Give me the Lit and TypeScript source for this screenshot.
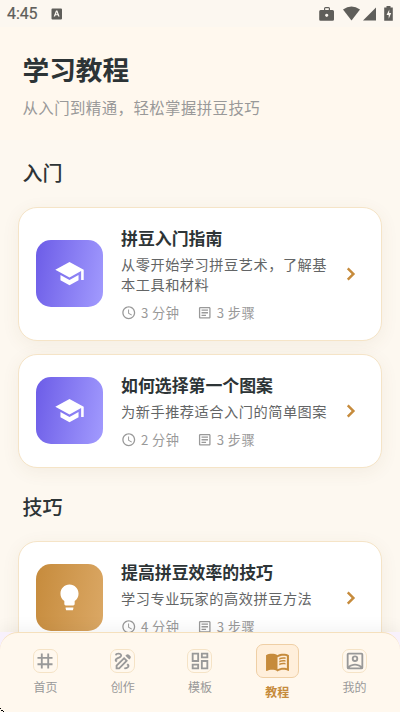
import { LitElement, html, css, svg } from "lit";
import { customElement, property } from "lit/decorators.js";

const ICONS: Record<string, unknown> = {
  school: svg`<path d="M5 13.18v4L12 21l7-3.82v-4L12 17l-7-3.82zM12 3L1 9l11 6 9-4.91V17h2V9L12 3z"/>`,
  bulb: svg`<path d="M12 2C8.1 2 5 5.1 5 9c0 2.4 1.2 4.5 3 5.7V17c0 .6.5 1.1 1.1 1.1h5.8c.6 0 1.1-.5 1.1-1.1v-2.3c1.8-1.2 3-3.3 3-5.7 0-3.9-3.1-7-7-7zM9 19.7h6v.8l-.4 1.4H9.4L9 20.5z"/>`,
  clock: svg`<path d="M11.99 2C6.47 2 2 6.48 2 12s4.47 10 9.99 10C17.52 22 22 17.52 22 12S17.52 2 11.99 2zM12 20c-4.42 0-8-3.58-8-8s3.58-8 8-8 8 3.58 8 8-3.58 8-8 8zm.5-13H11v6l5.25 3.15.75-1.23-4.5-2.67z"/>`,
  article: svg`<path d="M19 5v14H5V5h14m0-2H5c-1.1 0-2 .9-2 2v14c0 1.1.9 2 2 2h14c1.1 0 2-.9 2-2V5c0-1.1-.9-2-2-2zm-5 14H7v-2h7v2zm3-4H7v-2h10v2zm0-4H7V7h10v2z"/>`,
  chevron: svg`<path d="M9.8 6 8.2 7.6 12.6 12l-4.4 4.4L9.8 18l6-6z"/>`,
  grid: svg`<path d="M3.8 7.5h16.4v2H3.8zM3.8 14.5h16.4v2H3.8zM7.5 3.8h2v16.4h-2zM14.5 3.8h2v16.4h-2z"/>`,
  draw: svg`<path d="M18.85 10.39l1.06-1.06c.78-.78.78-2.05 0-2.83L18.5 5.09c-.78-.78-2.05-.78-2.83 0l-1.06 1.06 4.24 4.24zm-5.66-2.83L4 16.76V21h4.24l9.19-9.19-4.24-4.25zM7.41 19H6v-1.41l7.19-7.19 1.41 1.41L7.41 19zM19 17.5c0 2.19-2.54 3.5-5 3.5-.55 0-1-.45-1-1s.45-1 1-1c1.54 0 3-.73 3-1.5 0-.47-.48-.87-1.23-1.2l1.48-1.48c1.07.63 1.75 1.47 1.75 2.68zM4.58 13.35C3.61 12.79 3 12.06 3 11c0-1.8 1.89-2.63 3.56-3.36C7.59 7.18 9 6.56 9 6c0-.41-.78-1-2-1-1.26 0-1.8.61-1.83.64-.35.41-.98.46-1.4.12-.41-.34-.49-.95-.15-1.38C3.73 4.24 4.76 3 7 3s4 1.32 4 3c0 1.87-1.93 2.72-3.64 3.47C6.42 9.88 5 10.5 5 11c0 .31.43.6 1.07.86l-1.49 1.49z"/>`,
  dashboard: svg`<path d="M19 5v2h-4V5h4M9 5v6H5V5h4m10 8v6h-4v-6h4M9 17v2H5v-2h4M21 3h-8v6h8V3zM11 3H3v10h8V3zm10 8h-8v10h8V11zm-10 4H3v6h8v-6z"/>`,
  book: svg`<path d="M17.5 4.5c-1.95 0-4.05.4-5.5 1.5-1.45-1.1-3.55-1.5-5.5-1.5S2.45 4.9 1 6v14.65c0 .25.25.5.5.5.1 0 .15-.05.25-.05C3.1 20.45 5.05 20 6.5 20c1.95 0 4.05.4 5.5 1.5 1.35-.85 3.8-1.5 5.5-1.5 1.65 0 3.35.3 4.75 1.05.1.05.15.05.25.05.25 0 .5-.25.5-.5V6c-1.45-1.1-3.55-1.5-5.5-1.5zm3.5 14c-1.1-.35-2.3-.5-3.5-.5-1.7 0-4.15.65-5.5 1.5V8c1.35-.85 3.8-1.5 5.5-1.5 1.2 0 2.4.15 3.5.5v11.5zM13.7 10.2c1.7-.9 3.8-1.1 6-.7v-1.5c-2.2-.4-4.3-.2-6 .6zM13.7 12.9c1.7-.9 3.8-1.1 6-.7v-1.5c-2.2-.4-4.3-.2-6 .6zM13.7 15.6c1.7-.9 3.8-1.1 6-.7v-1.5c-2.2-.4-4.3-.2-6 .6z"/>`,
  account: svg`<path fill-rule="evenodd" d="M5 3h14a2 2 0 0 1 2 2v14a2 2 0 0 1-2 2H5a2 2 0 0 1-2-2V5a2 2 0 0 1 2-2zM5 5v12.5C6.8 16 9.2 15 12 15s5.2 1 7 2.5V5zM6.26 19h11.48c-.66-.52-2.96-2-5.74-2s-5.08 1.48-5.74 2zM12 6a3.5 3.5 0 1 1 0 7 3.5 3.5 0 0 1 0-7zm0 2a1.5 1.5 0 1 0 0 3 1.5 1.5 0 0 0 0-3z"/>`,
};

@customElement("ui-icon")
class UiIcon extends LitElement {
  @property() name = "";
  static styles = css`
    :host { display: block; flex: none; }
    svg { display: block; width: 100%; height: 100%; fill: currentColor; }
  `;
  render() {
    return html`<svg viewBox="0 0 24 24">${ICONS[this.name]}</svg>`;
  }
}

@customElement("tutorial-card")
class TutorialCard extends LitElement {
  @property() icon = "";
  @property() heading = "";
  @property() text = "";
  @property() minutes = "";
  @property() steps = "";
  static styles = css`
    :host { display: block; }
    .card {
      display: flex; align-items: center; box-sizing: border-box;
      margin: 0 18px 13.5px; padding: 18px 17px; border: 1px solid #f5e4c7;
      border-radius: 19px; background: #fff;
      box-shadow: 0 4px 18px rgba(120, 90, 40, 0.07);
    }
    .tile {
      display: flex; align-items: center; justify-content: center; flex: none;
      width: 67px; height: 67px; border-radius: 15px; color: #fff;
      background: linear-gradient(100deg, #6c5ce7, #a29bfe);
    }
    .tile.bulb { background: linear-gradient(100deg, #c68b3c, #dba865); }
    .tile ui-icon { width: 31px; height: 31px; }
    .body { flex: 1; min-width: 0; margin-left: 18px; }
    .heading { font-size: 16.9px; line-height: 24px; font-weight: 700; color: #2d3436; white-space: nowrap; }
    .text { margin-top: 4px; width: 210px; font-size: 14.2px; line-height: 20px; letter-spacing: 0.53px; color: #636566; }
    .meta { display: flex; align-items: center; margin-top: 9.5px; font-size: 13.2px; line-height: 18px; letter-spacing: 0.4px; color: #999; white-space: nowrap; }
    .meta ui-icon { width: 15.5px; height: 15.5px; margin-right: 4.5px; }
    .meta span + ui-icon { margin-left: 17.5px; }
    .go { width: 26px; height: 26px; color: #c68b3c; }
  `;
  render() {
    return html`<div class="card">
      <div class="tile ${this.icon}"><ui-icon name=${this.icon}></ui-icon></div>
      <div class="body">
        <div class="heading">${this.heading}</div>
        <div class="text">${this.text}</div>
        <div class="meta">
          <ui-icon name="clock"></ui-icon><span>${this.minutes} 分钟</span>
          <ui-icon name="article"></ui-icon><span>${this.steps} 步骤</span>
        </div>
      </div>
      <ui-icon class="go" name="chevron"></ui-icon>
    </div>`;
  }
}

const TABS = [
  { icon: "grid", label: "首页" },
  { icon: "draw", label: "创作" },
  { icon: "dashboard", label: "模板" },
  { icon: "book", label: "教程", active: true },
  { icon: "account", label: "我的" },
];

@customElement("app-root")
class AppRoot extends LitElement {
  static styles = css`
    :host {
      display: flex; flex-direction: column; position: relative; width: 400px; height: 712px; overflow: hidden;
      background: #fdf8f0; font-family: "Noto Sans CJK SC", sans-serif;
    }
    .status {
      display: flex; align-items: center; justify-content: space-between; box-sizing: border-box;
      flex: none; height: 27px; padding: 0 1px 0 7px; background: #fcf7f0; color: #5f5e5a;
    }
    .left, .right { display: flex; align-items: center; }
    .time { font: 400 16px/27px Roboto, sans-serif; letter-spacing: -0.1px; -webkit-text-stroke: 0.2px currentColor; }
    .badge { margin-left: 14px; }
    .status svg { display: block; fill: currentColor; }
    .header { flex: none; box-sizing: border-box; height: 113px; padding: 23px 22.5px 0; background: #fff8ee; }
    .title { font-size: 26.7px; line-height: 38px; font-weight: 700; color: #2d3436; }
    .subtitle { margin-top: 8px; font-size: 15.4px; line-height: 22px; letter-spacing: 0.45px; color: #999; }
    .list { flex: 1; min-height: 0; overflow: hidden; }
    .section { height: 67px; box-sizing: border-box; padding: 18px 22.5px 0; font-size: 20px; line-height: 29px; font-weight: 500; color: #2d3436; }
    .section.next { height: 60px; padding-top: 11px; }
    .dock { flex: none; position: relative; background: #f8f1fc; box-shadow: 0 -4px 15px rgba(0, 0, 0, 0.05); }
    .nav {
      box-sizing: border-box; height: 80px;
      display: grid; grid-template-columns: repeat(5, 77.3px); justify-content: center;
      border-top: 1px solid #f5e0bd; border-radius: 18px 18px 0 0; background: #fff8ee;
    }
    .corner { position: absolute; left: 0; bottom: 0; display: block; }
    .tab { display: flex; flex-direction: column; align-items: center; padding-top: 16px; color: #999; }
    .pill {
      display: flex; align-items: center; justify-content: center; box-sizing: border-box;
      width: 25px; height: 24px; border: 1px solid #f5e3c6; border-radius: 7px;
    }
    .pill ui-icon { width: 22px; height: 22px; }
    .label { margin-top: 5px; font-size: 12px; line-height: 18px; }
    .active { padding-top: 11px; color: #c68b3c; }
    .active .pill { width: 43px; height: 34px; border-color: #efcfa5; background: #ffefdb; }
    .active .pill ui-icon { width: 25px; height: 25px; }
    .active .label { font-weight: 700; }
  `;
  render() {
    return html`
      <div class="status">
        <div class="left">
          <span class="time">4:45</span>
          <svg class="badge" width="12" height="12" viewBox="0 0 12 12"><path fill-rule="evenodd" d="M1.5 0.5h8.5a1 1 0 0 1 1 1v9a1 1 0 0 1-1 1h-8.5a1 1 0 0 1-1-1v-9a1 1 0 0 1 1-1zM5 2.5 2.7 8.5h1.4l.4-1.2h2.3l.4 1.2h1.4L6.4 2.5zM5.7 4l.7 2.2H5z"/></svg>
        </div>
        <div class="right">
          <svg width="81" height="18" viewBox="0 0 81 18">
            <path fill-rule="evenodd" d="M6 5V3.500Q6 2 7.500 2h3Q12 2 12 3.500V5h2.500q1.500 0 1.500 1.500v8q0 1.300-1.500 1.300H2.500Q1.200 15.800 1.200 14.500v-8Q1.200 5 2.500 5zM7.200 5h3.600V3.300H7.200zM8.700 8.700a1.600 1.600 0 1 0 .01 0z"/>
            <path d="M25 4.500Q33.500-1.500 42 4.500L33.500 15.500z"/>
            <path d="M58 2.500v13H45z"/>
            <path fill-rule="evenodd" d="M66.500 2.500h2V1h4v1.500h2.300v13.300h-8.600V2.500zM71.300 4.500 68.500 10h2.200v3.800L73.200 8h-2z"/>
          </svg>
        </div>
      </div>
      <div class="header">
        <div class="title">学习教程</div>
        <div class="subtitle">从入门到精通，轻松掌握拼豆技巧</div>
      </div>
      <div class="list">
        <div class="section">入门</div>
        <tutorial-card icon="school" heading="拼豆入门指南" text="从零开始学习拼豆艺术，了解基本工具和材料" minutes="3" steps="3"></tutorial-card>
        <tutorial-card icon="school" heading="如何选择第一个图案" text="为新手推荐适合入门的简单图案" minutes="2" steps="3"></tutorial-card>
        <div class="section next">技巧</div>
        <tutorial-card icon="bulb" heading="提高拼豆效率的技巧" text="学习专业玩家的高效拼豆方法" minutes="4" steps="3"></tutorial-card>
      </div>
      <div class="dock">
        <div class="nav">
          ${TABS.map((t) => html`<div class="tab ${t.active ? "active" : ""}">
            <div class="pill"><ui-icon name=${t.icon}></ui-icon></div>
            <div class="label">${t.label}</div>
          </div>`)}
        </div>
        <svg class="corner" width="4" height="4" viewBox="0 0 4 4"><path d="M0 0h1v1H0zM1 2h1v1H1zM2 2h1v1H2zM3 3h1v1H3z"/></svg>
      </div>`;
  }
}
